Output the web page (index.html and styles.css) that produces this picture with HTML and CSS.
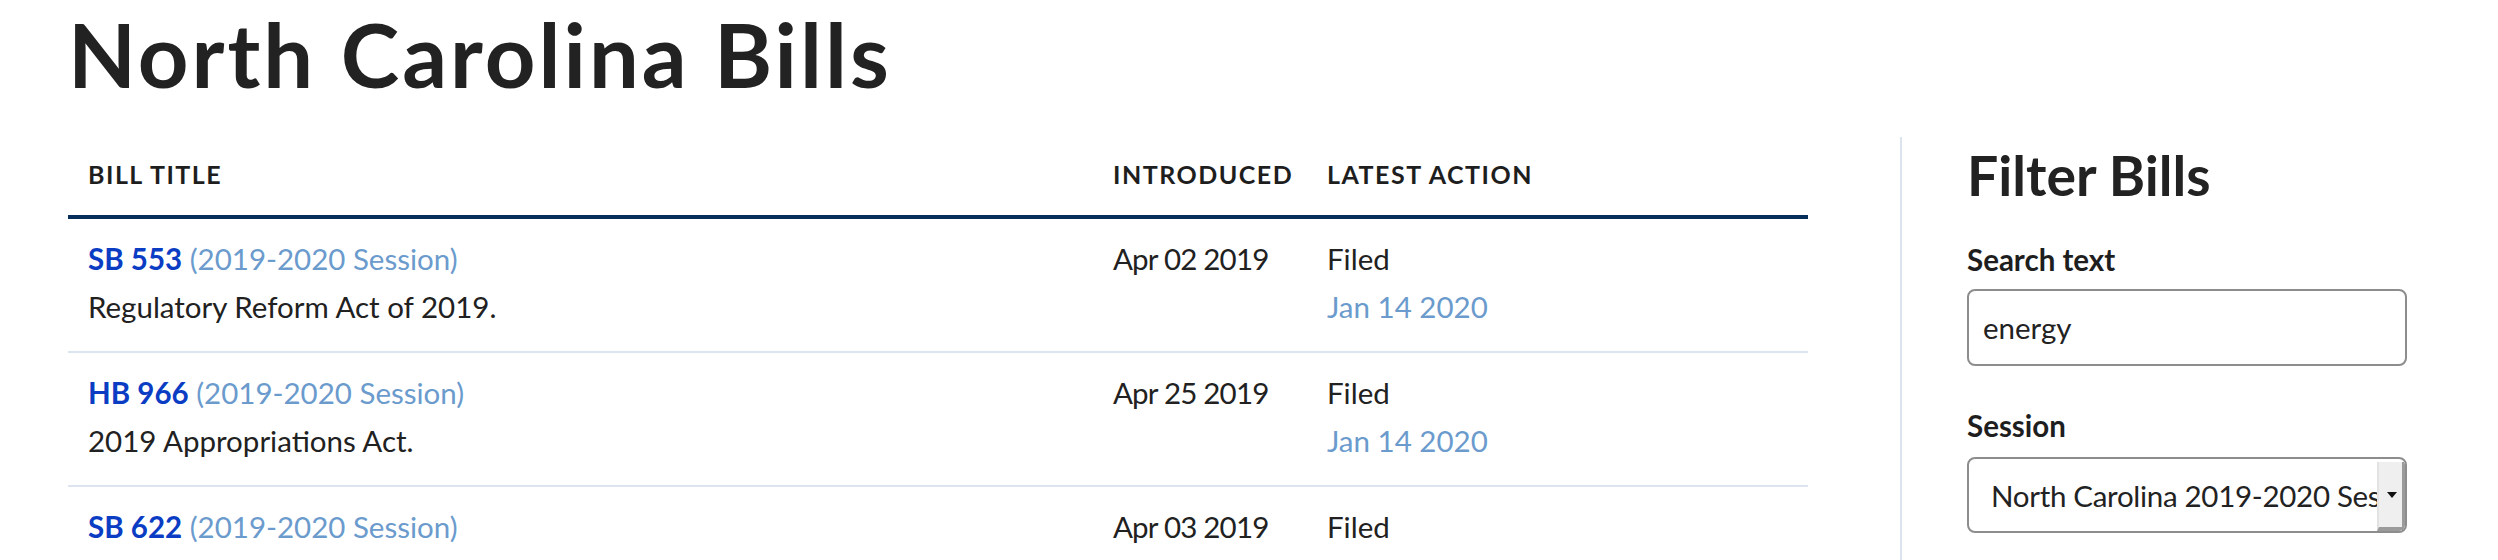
FILE: index.html
```html
<!DOCTYPE html>
<html lang="en">
<head>
<meta charset="utf-8">
<title>North Carolina Bills</title>
<link rel="stylesheet" href="styles.css">
</head>
<body>
<div class="page">
  <h1 class="page-title">North Carolina Bills</h1>
  <div class="layout">
    <main class="main">
      <table class="bills">
        <colgroup>
          <col class="col-title">
          <col class="col-intro">
          <col class="col-action">
        </colgroup>
        <thead>
          <tr>
            <th>Bill Title</th>
            <th>Introduced</th>
            <th>Latest Action</th>
          </tr>
        </thead>
        <tbody>
          <tr>
            <td>
              <div><a class="bill-id" href="#">SB 553</a> <span class="session">(2019-2020 Session)</span></div>
              <div>Regulatory Reform Act of 2019.</div>
            </td>
            <td class="date-cell">Apr 02 2019</td>
            <td>
              <div>Filed</div>
              <div class="action-date">Jan 14 2020</div>
            </td>
          </tr>
          <tr>
            <td>
              <div><a class="bill-id" href="#">HB 966</a> <span class="session">(2019-2020 Session)</span></div>
              <div>2019 Appropriations Act.</div>
            </td>
            <td class="date-cell">Apr 25 2019</td>
            <td>
              <div>Filed</div>
              <div class="action-date">Jan 14 2020</div>
            </td>
          </tr>
          <tr>
            <td>
              <div><a class="bill-id" href="#">SB 622</a> <span class="session">(2019-2020 Session)</span></div>
              <div>Various Clarifying Changes.</div>
            </td>
            <td class="date-cell">Apr 03 2019</td>
            <td>
              <div>Filed</div>
              <div class="action-date">Jan 14 2020</div>
            </td>
          </tr>
        </tbody>
      </table>
    </main>
    <aside class="sidebar">
      <h2 class="sidebar-title">Filter Bills</h2>
      <label class="field-label field-label-first" for="q">Search text</label>
      <input class="text-input" id="q" type="text" value="energy">
      <label class="field-label field-label-next" for="session">Session</label>
      <div class="select-box">
        <select class="select" id="session">
          <option>North Carolina 2019-2020 Session</option>
        </select>
        <span class="select-btn"><span class="select-arrow"></span></span>
      </div>
    </aside>
  </div>
</div>
</body>
</html>
```

FILE: styles.css
```css
html, body {
  margin: 0;
  padding: 0;
  overflow: hidden;
  background: #ffffff;
}

body {
  font-family: Lato, "Liberation Sans", sans-serif;
  color: #212121;
}

.page {
  padding: 1px 91px 0 68px;
}

.page-title {
  margin: 0 0 30px;
  font-size: 88.4px;
  line-height: 1.2;
  font-weight: 700;
  letter-spacing: 3px;
  color: #222222;
}

.layout {
  display: flex;
  align-items: stretch;
}

.main {
  flex: 1 1 auto;
  min-width: 0;
  padding-right: 92px;
}

.bills {
  width: 100%;
  table-layout: fixed;
  border-collapse: collapse;
  font-size: 29.5px;
  line-height: 48px;
}

.col-title { width: 1025px; }
.col-intro { width: 214px; }
.col-action { width: auto; }

.bills th {
  text-align: left;
  font-size: 25px;
  line-height: 36px;
  font-weight: 700;
  text-transform: uppercase;
  letter-spacing: 1.5px;
  color: #1e1e1e;
  padding: 19px 20px 23px;
  border-bottom: 4px solid #062e5a;
}

.bills td {
  vertical-align: top;
  padding: 16px 20px 20px;
  border-bottom: 2px solid #dce5ef;
  color: #212121;
}

.bills .date-cell {
  letter-spacing: -0.8px;
}

.bill-id {
  color: #0b3dc4;
  font-weight: 700;
  text-decoration: none;
}

.session,
.action-date {
  color: #6b9bcd;
}

.sidebar {
  flex: 0 0 507px;
  box-sizing: border-box;
  border-left: 2px solid #dce5ef;
  padding-left: 65px;
}

.sidebar-title {
  margin: 5px 0 0;
  font-size: 55.3px;
  line-height: 1.2;
  font-weight: 700;
  color: #222222;
}

.field-label {
  display: block;
  font-size: 29.5px;
  line-height: 48px;
  font-weight: 700;
  color: #1e1e1e;
}

.field-label-first { margin-top: 28px; }
.field-label-next { margin-top: 36px; }

.text-input {
  display: block;
  box-sizing: border-box;
  width: 440px;
  height: 77px;
  margin: 5px 0 0;
  padding: 0 14px;
  border: 2px solid #8d8d8d;
  border-radius: 8px;
  font-family: Lato, "Liberation Sans", sans-serif;
  font-size: 29.5px;
  color: #222222;
  background: #ffffff;
  outline: none;
}

.select-box {
  display: flex;
  box-sizing: border-box;
  width: 440px;
  height: 76px;
  margin-top: 7px;
  border: 2px solid #8d8d8d;
  border-radius: 8px;
  overflow: hidden;
  background: #ffffff;
}

.select {
  flex: 1 1 auto;
  min-width: 0;
  height: 100%;
  -webkit-appearance: none;
  appearance: none;
  border: 0;
  margin: 0;
  padding: 0 0 0 22px;
  background: transparent;
  font-family: Lato, "Liberation Sans", sans-serif;
  font-size: 29.5px;
  letter-spacing: -0.3px;
  color: #222222;
  outline: none;
}

.select-btn {
  flex: 0 0 auto;
  box-sizing: border-box;
  width: 28px;
  margin-top: 3px;
  display: flex;
  align-items: center;
  justify-content: center;
  padding-left: 2px;
  background: #efefef;
  border-left: 2px solid #e2e2e2;
  border-right: 3px solid #9b9b9b;
  border-bottom: 4px solid #9b9b9b;
}

.select-arrow {
  width: 0;
  height: 0;
  border-left: 5px solid transparent;
  border-right: 5px solid transparent;
  border-top: 6px solid #111111;
}
```
